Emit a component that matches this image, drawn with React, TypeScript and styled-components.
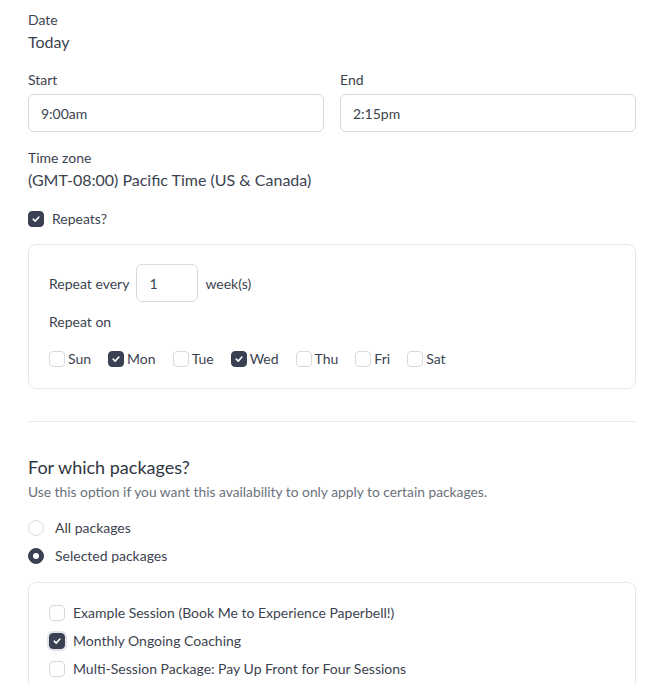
import React, { useState } from 'react'
import styled, { createGlobalStyle } from 'styled-components'

const GlobalStyle = createGlobalStyle`
  body {
    margin: 0;
    background: #ffffff;
    font-family: Lato, 'Open Sans', sans-serif;
    color: #3c4350;
  }
  * { box-sizing: border-box; }
`

const Page = styled.div`
  width: 664px;
  padding: 10px 28px 0;
`

const Label = styled.div`
  font-size: 14px;
  line-height: 20px;
  color: #3c4350;
`

const Value = styled.div`
  font-size: 16px;
  line-height: 24px;
  color: #3c4350;
`

const Field = styled.div<{ $mt?: number }>`
  margin-top: ${({ $mt }) => $mt ?? 0}px;
  display: flex;
  flex-direction: column;
`

const TimeRow = styled.div`
  margin-top: 16px;
  display: grid;
  grid-template-columns: 1fr 1fr;
  gap: 16px;
`

const TextInput = styled.input<{ $width?: number }>`
  margin-top: 4px;
  width: ${({ $width }) => ($width ? `${$width}px` : '100%')};
  height: 38px;
  border: 1px solid #d8dbe0;
  border-radius: 6px;
  padding: 0 12px;
  font-family: inherit;
  font-size: 14px;
  color: #3c4350;
  outline: none;
  background: #fff;
`

const CheckRow = styled.label<{ $gap?: number; $mt?: number }>`
  display: flex;
  align-items: center;
  gap: ${({ $gap }) => $gap ?? 8}px;
  margin-top: ${({ $mt }) => $mt ?? 0}px;
  font-size: 14px;
  line-height: 20px;
  color: #3c4350;
  cursor: pointer;
`

const Box = styled.span<{ $checked: boolean; $ring?: boolean }>`
  width: 16px;
  height: 16px;
  flex: none;
  border-radius: 4px;
  display: inline-flex;
  align-items: center;
  justify-content: center;
  background: ${({ $checked }) => ($checked ? '#3a4152' : '#fff')};
  border: 1px solid ${({ $checked }) => ($checked ? '#3a4152' : '#d6d9de')};
  box-shadow: ${({ $ring }) => ($ring ? '0 0 0 2px #e2e4e8' : 'none')};
`

const Card = styled.div<{ $mt?: number }>`
  margin-top: ${({ $mt }) => $mt ?? 16}px;
  border: 1px solid #e6e8eb;
  border-radius: 8px;
  padding: 19px 20px;
`

const PackageCard = styled(Card)`
  padding-top: 20px;
`

const InlineRow = styled.div`
  display: flex;
  align-items: center;
  gap: 7px;
  font-size: 14px;
  color: #3c4350;

  ${TextInput} {
    margin-top: 0;
  }
`

const DayRow = styled.div`
  margin-top: 17px;
  display: flex;
  align-items: center;
  gap: 17px;
`

const Divider = styled.hr`
  margin: 32px 0 0;
  border: none;
  border-top: 1px solid #e8eaed;
`

const Heading = styled.h3`
  margin: 33px 0 0;
  font-size: 18px;
  line-height: 24px;
  font-weight: 400;
  color: #2f3542;
`

const Hint = styled.p`
  margin: 3px 0 0;
  font-size: 13.8px;
  line-height: 20px;
  color: #6b717c;
`

const Radio = styled.span<{ $checked: boolean }>`
  width: 16px;
  height: 16px;
  flex: none;
  border-radius: 50%;
  display: inline-flex;
  align-items: center;
  justify-content: center;
  background: ${({ $checked }) => ($checked ? '#3a4152' : '#fff')};
  border: 1px solid ${({ $checked }) => ($checked ? '#3a4152' : '#dadde1')};

  &::after {
    content: '';
    width: 6px;
    height: 6px;
    border-radius: 50%;
    background: ${({ $checked }) => ($checked ? '#fff' : 'transparent')};
  }
`

const PackageList = styled.div`
  display: flex;
  flex-direction: column;
  gap: 8px;
`

const Tick = () => (
  <svg width="10" height="10" viewBox="0 0 10 10">
    <path d="M2.2 5.2 L4.2 7.1 L7.9 3" fill="none" stroke="#fff" strokeWidth="1.6" strokeLinecap="round" strokeLinejoin="round" />
  </svg>
)

const Check = ({
  checked,
  ring,
  gap,
  mt,
  onToggle,
  children,
}: {
  checked: boolean
  ring?: boolean
  gap?: number
  mt?: number
  onToggle: () => void
  children: React.ReactNode
}) => (
  <CheckRow $gap={gap} $mt={mt} onClick={onToggle}>
    <Box $checked={checked} $ring={ring}>{checked && <Tick />}</Box>
    <span>{children}</span>
  </CheckRow>
)

const DAYS = ['Sun', 'Mon', 'Tue', 'Wed', 'Thu', 'Fri', 'Sat']
const PACKAGES = [
  'Example Session (Book Me to Experience Paperbell!)',
  'Monthly Ongoing Coaching',
  'Multi-Session Package: Pay Up Front for Four Sessions',
]

export default function App() {
  const [repeats, setRepeats] = useState(true)
  const [days, setDays] = useState<string[]>(['Mon', 'Wed'])
  const [scope, setScope] = useState<'all' | 'selected'>('selected')
  const [packages, setPackages] = useState<string[]>(['Monthly Ongoing Coaching'])

  const toggleDay = (d: string) =>
    setDays((cur) => (cur.includes(d) ? cur.filter((x) => x !== d) : [...cur, d]))
  const togglePackage = (p: string) =>
    setPackages((cur) => (cur.includes(p) ? cur.filter((x) => x !== p) : [...cur, p]))

  return (
    <>
      <GlobalStyle />
      <Page>
        <Field>
          <Label>Date</Label>
          <Value>Today</Value>
        </Field>

        <TimeRow>
          <Field>
            <Label>Start</Label>
            <TextInput defaultValue="9:00am" />
          </Field>
          <Field>
            <Label>End</Label>
            <TextInput defaultValue="2:15pm" />
          </Field>
        </TimeRow>

        <Field $mt={16}>
          <Label>Time zone</Label>
          <Value>(GMT-08:00) Pacific Time (US &amp; Canada)</Value>
        </Field>

        <Check checked={repeats} mt={17} onToggle={() => setRepeats(!repeats)}>
          Repeats?
        </Check>

        <Card $mt={15}>
          <InlineRow>
            <span>Repeat every</span>
            <TextInput $width={62} defaultValue="1" />
            <span>week(s)</span>
          </InlineRow>
          <Field $mt={10}>
            <Label>Repeat on</Label>
          </Field>
          <DayRow>
            {DAYS.map((d) => (
              <Check key={d} checked={days.includes(d)} gap={3} onToggle={() => toggleDay(d)}>
                {d}
              </Check>
            ))}
          </DayRow>
        </Card>

        <Divider />

        <Heading>For which packages?</Heading>
        <Hint>Use this option if you want this availability to only apply to certain packages.</Hint>

        <CheckRow $gap={11} $mt={16} onClick={() => setScope('all')}>
          <Radio $checked={scope === 'all'} />
          <span>All packages</span>
        </CheckRow>
        <CheckRow $gap={11} $mt={8} onClick={() => setScope('selected')}>
          <Radio $checked={scope === 'selected'} />
          <span>Selected packages</span>
        </CheckRow>

        <PackageCard $mt={16}>
          <PackageList>
            {PACKAGES.map((p) => (
              <Check
                key={p}
                checked={packages.includes(p)}
                ring={p === 'Monthly Ongoing Coaching'}
                onToggle={() => togglePackage(p)}
              >
                {p}
              </Check>
            ))}
          </PackageList>
        </PackageCard>
      </Page>
    </>
  )
}
